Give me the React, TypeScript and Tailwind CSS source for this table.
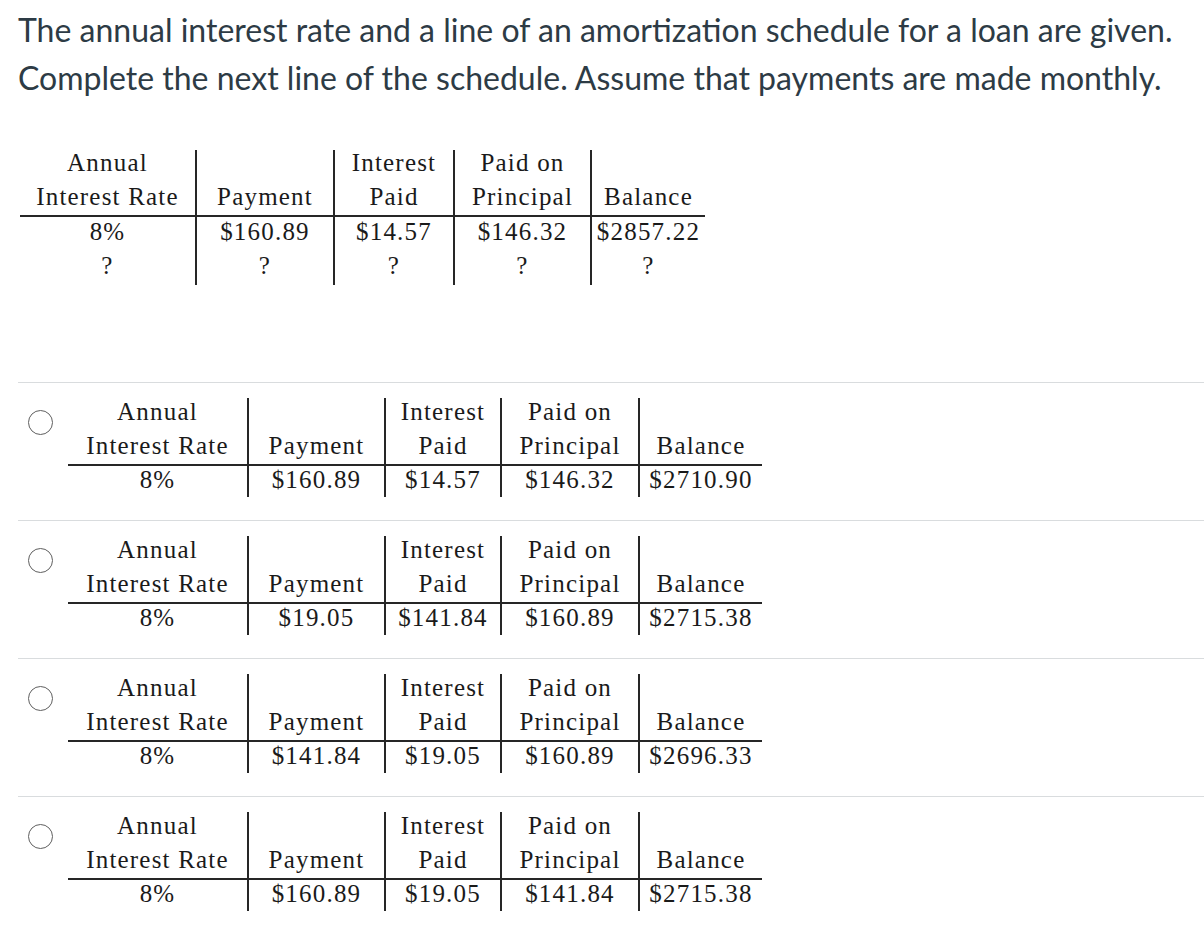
import React from 'react';

type Col = { h1: string; h2: string; w: number };

const QUESTION_COLS: Col[] = [
    { h1: 'Annual', h2: 'Interest Rate', w: 175 },
    { h1: '', h2: 'Payment', w: 138 },
    { h1: 'Interest', h2: 'Paid', w: 120 },
    { h1: 'Paid on', h2: 'Principal', w: 137 },
    { h1: '', h2: 'Balance', w: 115 },
];

const OPTION_WIDTHS = [179, 137, 116, 138, 124];

const QUESTION_ROWS = [
    ['8%', '$160.89', '$14.57', '$146.32', '$2857.22'],
    ['?', '?', '?', '?', '?'],
];

const OPTIONS = [
    ['8%', '$160.89', '$14.57', '$146.32', '$2710.90'],
    ['8%', '$19.05', '$141.84', '$160.89', '$2715.38'],
    ['8%', '$141.84', '$19.05', '$160.89', '$2696.33'],
    ['8%', '$160.89', '$19.05', '$141.84', '$2715.38'],
];

// Schedule table drawn like the scanned image: serif, rules between columns
function Schedule({
    cols,
    rows,
    compact,
}: {
    cols: Col[];
    rows: string[][];
    compact?: boolean;
}) {
    return (
        <div className="flex font-['Liberation_Serif',serif] text-[25px] tracking-[1.2px] text-[#1a1a1a]">
            {cols.map((c, i) => (
                <div
                    key={i}
                    style={{ width: c.w }}
                    className={
                        i > 0
                            ? 'flex flex-col border-l-2 border-[#262626]'
                            : 'flex flex-col'
                    }
                >
                    <div
                        className={
                            compact
                                ? 'flex h-[68px] flex-col border-b-2 border-[#262626] text-center'
                                : 'flex h-[67px] flex-col border-b-2 border-[#262626] text-center'
                        }
                    >
                        <div
                            className={
                                compact
                                    ? '-mt-[3px] h-[34px] leading-[34px]'
                                    : '-mt-[4px] h-[34px] leading-[34px]'
                            }
                        >
                            {c.h1}
                        </div>
                        <div className="h-[34px] leading-[34px]">{c.h2}</div>
                    </div>
                    {rows.map((r, j) => (
                        <div
                            key={j}
                            className={
                                compact
                                    ? 'h-[31px] text-center leading-[28px]'
                                    : 'h-[34px] text-center leading-[30px]'
                            }
                        >
                            {r[i]}
                        </div>
                    ))}
                </div>
            ))}
        </div>
    );
}

export default function App() {
    const optionCols = QUESTION_COLS.map((c, i) => ({
        ...c,
        w: OPTION_WIDTHS[i],
    }));

    return (
        <div className="min-h-screen bg-white pt-[6px] pl-[18px] font-['Lato',sans-serif]">
            <p className="text-[32px] leading-[48px] text-[#2d3b45]">
                The annual interest rate and a line of an amortization
                schedule for a loan are given.
                <br />
                Complete the next line of the schedule. Assume that payments
                are made monthly.
            </p>

            <div className="mt-[48px] ml-[2px]">
                <Schedule cols={QUESTION_COLS} rows={QUESTION_ROWS} />
            </div>

            {/* Answer choices */}
            <div className="mt-[97px]">
                {OPTIONS.map((row, k) => (
                    <div
                        key={k}
                        className="flex h-[138px] items-start border-t border-[#d9dcde]"
                    >
                        <div className="mt-[27px] ml-[10px] h-[25px] w-[25px] shrink-0 rounded-full border-[1.5px] border-[#5f5f5f]" />
                        <div className="mt-[15px] ml-[15px]">
                            <Schedule cols={optionCols} rows={[row]} compact />
                        </div>
                    </div>
                ))}
            </div>
        </div>
    );
}
